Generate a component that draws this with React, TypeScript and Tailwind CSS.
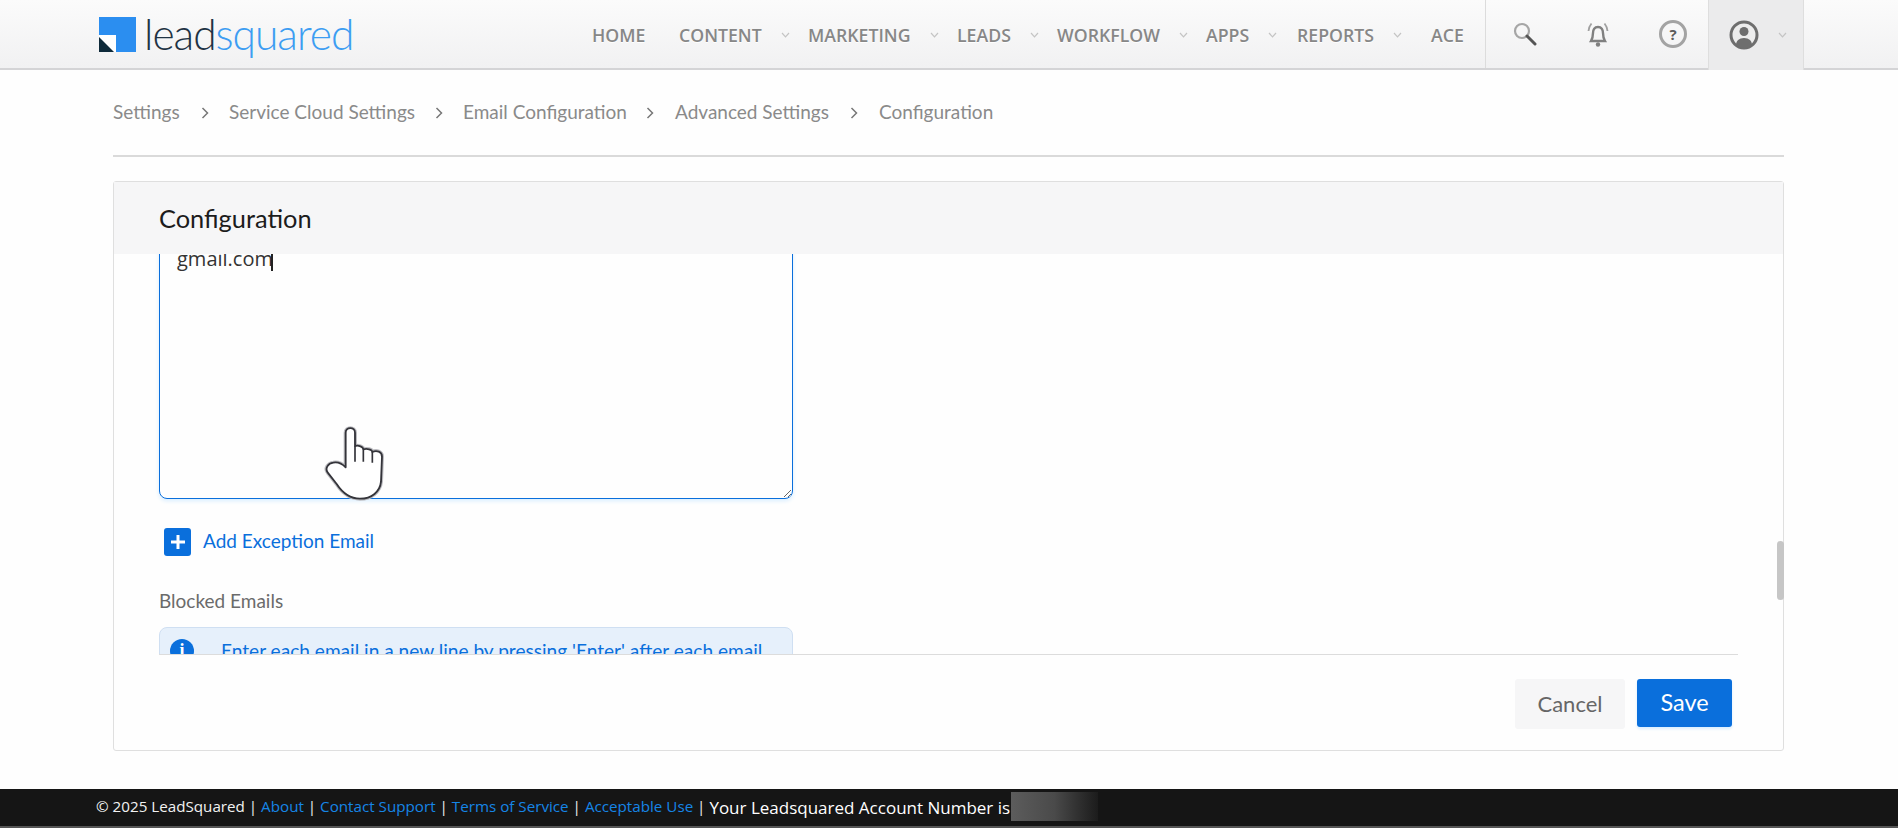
const Chev = () => (
  <svg width="9" height="6" viewBox="0 0 9 6" className="ml-[19px] shrink-0" fill="none" stroke="#c4c4c4" strokeWidth="1.2">
    <path d="M1 1l3.5 3.8L8 1" />
  </svg>
);

const Sep = () => (
  <svg width="8" height="12" viewBox="0 0 8 12" fill="none" stroke="#777" strokeWidth="1.5" className="shrink-0">
    <path d="M1.5 1l5 5-5 5" />
  </svg>
);

function NavItem({ label, className, chev = true }: { label: string; className: string; chev?: boolean }) {
  return (
    <div className={"flex h-full items-center pt-[2px] " + className}>
      <span className="font-['Open_Sans',sans-serif] text-[17.7px] font-semibold text-[#878787] [text-shadow:0_1px_0_#fff]">{label}</span>
      {chev && <Chev />}
    </div>
  );
}

function Crumb({ label, className }: { label: string; className: string }) {
  return <span className={"text-[19px] text-[#8a8a8a] " + className}>{label}</span>;
}

const Hand = () => (
  <svg width="100" height="100" viewBox="0 0 300 300" className="absolute top-[228px] left-[186px]">
    <path
      d="M137 172L137 68C137 50 165 50 165 68L165 108C175 105 190 110 190 118C200 115 217 118 217 126C230 120 246 125 246 140L243 215C240 245 215 266 180 266C150 266 125 245 110 222L85 190C72 175 85 160 100 158C115 155 130 165 137 172Z"
      fill="#fff"
      stroke="#bcbcc0"
      strokeWidth="12"
      strokeLinejoin="round"
    />
    <path
      d="M137 172L137 68C137 50 165 50 165 68L165 108C175 105 190 110 190 118C200 115 217 118 217 126C230 120 246 125 246 140L243 215C240 245 215 266 180 266C150 266 125 245 110 222L85 190C72 175 85 160 100 158C115 155 130 165 137 172Z"
      fill="#fff"
      stroke="#34343a"
      strokeWidth="5.500"
      strokeLinejoin="round"
    />
    <path d="M165 108L165 155M190 118L190 155M217 126L217 158" fill="none" stroke="#34343a" strokeWidth="5" />
  </svg>
);

export default function App() {
  return (
    <div className="flex h-screen w-full flex-col overflow-hidden bg-[#fefefe] font-['Lato',sans-serif]">
      <header className="flex h-[70px] shrink-0 border-b-2 border-[#d4d4d6] bg-gradient-to-b from-[#fbfbfb] to-[#f1f1f2] pl-[99px]">
        <div className="flex w-[493px] items-center">
          <svg width="37" height="35" viewBox="0 0 37 35" className="shrink-0">
            <rect width="37" height="35" fill="#2b8ef0" />
            <rect y="18" width="17" height="17" fill="#fff" />
            <path d="M0 20l15 15H0z" fill="#0e2a3a" />
          </svg>
          <span className="ml-[8px] text-[42.500px] leading-none font-light tracking-[-1px]">
            <span className="text-[#1f3344]">lead</span>
            <span className="text-[#3d9df2]">squared</span>
          </span>
        </div>
        <NavItem label="HOME" className="w-[87px]" chev={false} />
        <NavItem label="CONTENT" className="w-[129px]" />
        <NavItem label="MARKETING" className="w-[149px]" />
        <NavItem label="LEADS" className="w-[100px]" />
        <NavItem label="WORKFLOW" className="w-[149px]" />
        <NavItem label="APPS" className="w-[91px]" />
        <NavItem label="REPORTS" className="w-[134px]" />
        <NavItem label="ACE" className="w-[54px]" chev={false} />
        <div className="flex h-full w-[223px] items-center border-l border-[#dcdcdc] pl-[27px]">
          <svg width="24" height="24" viewBox="0 0 24 24" fill="none">
            <circle cx="9" cy="9" r="7" stroke="#a6a6a6" strokeWidth="2.200" />
            <path d="M14 14l8 8" stroke="#555" strokeWidth="3" strokeLinecap="round" />
          </svg>
          <svg width="24" height="25" viewBox="0 0 24 25" fill="none" className="ml-[49px]">
            <path d="M12 5c-3.500 0-5 2.500-5 6 0 3.500-.6 5.500-2 8h14c-1.400-2.500-2-4.500-2-8 0-3.500-1.500-6-5-6z" stroke="#808080" strokeWidth="2.400" />
            <circle cx="12" cy="22.500" r="2.200" fill="#808080" />
            <path d="M2.500 9c0-2.500 1-5 3-7.500M21.500 9c0-2.500-1-5-3-7.500" stroke="#a0a0a0" strokeWidth="1.800" />
          </svg>
          <div className="ml-[49px] flex h-[28px] w-[28px] items-center justify-center rounded-full border-[3px] border-[#a3a3a3] font-['Open_Sans',sans-serif] text-[15px] font-bold text-[#5c5c5c]">?</div>
        </div>
        <div className="flex h-[70px] w-[96px] items-center border-x border-[#dedede] bg-[#ebebec] pl-[20px]">
          <svg width="30" height="30" viewBox="0 0 30 30" className="shrink-0">
            <circle cx="15" cy="15" r="13" fill="#ededed" stroke="#6e6e6e" strokeWidth="3" />
            <circle cx="15" cy="11.500" r="4.500" fill="#6e6e6e" />
            <path d="M7 25c0-4 3-7 8-7s8 3 8 7c-2 2-5 3.500-8 3.500S9 27 7 25z" fill="#6e6e6e" />
          </svg>
          <Chev />
        </div>
        <div className="flex-1" />
      </header>

      <nav className="mr-[114px] ml-[113px] flex h-[85px] shrink-0 items-center">
        <Crumb label="Settings" className="w-[88px]" />
        <Sep />
        <Crumb label="Service Cloud Settings" className="ml-[20px] w-[206px]" />
        <Sep />
        <Crumb label="Email Configuration" className="ml-[20px] w-[183px]" />
        <Sep />
        <Crumb label="Advanced Settings" className="ml-[21px] w-[175px]" />
        <Sep />
        <Crumb label="Configuration" className="ml-[21px]" />
      </nav>
      <div className="mr-[114px] ml-[113px] h-[2px] shrink-0 bg-[#dadada]" />

      <section className="relative mt-[24px] mr-[114px] ml-[113px] flex h-[570px] shrink-0 flex-col rounded-[3px] border border-[#dfdfdf]">
        <div className="flex h-[72px] shrink-0 items-center bg-[#f6f6f7] pl-[45px] text-[25.400px] text-[#1c1c1c]">Configuration</div>
        <div className="h-[400px] shrink-0 overflow-hidden pl-[45px]">
          <div className="relative -mt-[20px] h-[265px] w-[634px]">
            <textarea
              readOnly
              value="gmail.com"
              className="block h-full w-full rounded-[8px] border border-[#0a6fdc] bg-[#fefefe] px-[17px] pt-[12px] font-['Open_Sans',sans-serif] text-[20px] leading-[24px] text-[#333] shadow-[0_2px_4px_#d9eeff] outline-none"
            />
            <span className="absolute top-[19px] left-[112px] h-[18px] w-[1.500px] bg-[#222]" />
          </div>
          <div className="mt-[29px] ml-[5px] flex items-center">
            <div className="flex h-[28px] w-[27px] items-center justify-center rounded-[3px] bg-[#0a6fdc]">
              <svg width="16" height="16" viewBox="0 0 16 16" stroke="#fff" strokeWidth="3">
                <path d="M8 1v14M1 8h14" />
              </svg>
            </div>
            <span className="ml-[12px] -translate-y-[1px] text-[19px] text-[#0a6fdc]">Add Exception Email</span>
          </div>
          <div className="mt-[31px] text-[19px] leading-[26px] text-[#6b6b6b]">Blocked Emails</div>
          <div className="mt-[13px] flex h-[60px] w-[634px] items-start rounded-[8px] border border-[#cfdff2] bg-[#e6f0fb] pt-[11px] pl-[10px]">
            <div className="flex h-[24px] w-[24px] shrink-0 items-center justify-center rounded-full bg-[#0a6fdc] font-['Liberation_Serif',serif] text-[18px] font-bold text-white">i</div>
            <span className="ml-[27px] text-[19.100px] leading-[24px] whitespace-nowrap text-[#0a6fdc]">Enter each email in a new line by pressing 'Enter' after each email</span>
          </div>
        </div>
        <div className="mx-[45px] flex flex-1 items-start justify-end border-t border-[#dcdcdc] pt-[24px] pr-[6px]">
          <button className="h-[50px] w-[110px] rounded-[3px] bg-[#f6f6f7] pb-[2px] text-[22px] text-[#666]">Cancel</button>
          <button className="ml-[12px] h-[48px] w-[95px] rounded-[3px] bg-[#0a6fdc] text-[23.500px] text-white shadow-[0_2px_3px_#d9eeff]">Save</button>
        </div>
        <div className="absolute top-[359px] -right-[1px] h-[59px] w-[7px] rounded-full bg-[#c6c6c6]" />
        <Hand />
      </section>

      <div className="mt-auto flex h-[39px] shrink-0 items-center border-b-2 border-[#555] bg-[#151515] pb-[2px] pl-[96px] font-['Open_Sans',sans-serif] text-[15.200px] text-[#f2f2f2]">
        <span>© 2025 LeadSquared |&nbsp;</span>
        <span className="text-[#1585e6]">About</span>
        <span>&nbsp;|&nbsp;</span>
        <span className="text-[#1585e6]">Contact Support</span>
        <span>&nbsp;|&nbsp;</span>
        <span className="text-[#1585e6]">Terms of Service</span>
        <span>&nbsp;|&nbsp;</span>
        <span className="text-[#1585e6]">Acceptable Use</span>
        <span>&nbsp;|&nbsp;</span>
        <span className="pt-[3px] text-[17px] text-white">Your Leadsquared Account Number is</span>
        <div className="ml-[1px] h-[29px] w-[87px] bg-gradient-to-r from-[#5c5c5c] via-[#4a4a4a] to-[#1c1c1c]" />
      </div>
    </div>
  );
}
